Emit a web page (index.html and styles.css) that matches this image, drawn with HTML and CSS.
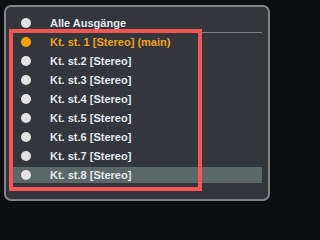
FILE: index.html
```html
<!DOCTYPE html>
<html>
<head>
<meta charset="utf-8">
<link rel="stylesheet" href="styles.css">
</head>
<body>
<div class="panel">
  <div class="header row">
    <span class="dot"></span>
    <span class="label">Alle Ausgänge</span>
  </div>
  <div class="sep"></div>
  <div class="list">
    <div class="row active"><span class="dot orange"></span><span class="label">Kt. st. 1 [Stereo] (main)</span></div>
    <div class="row"><span class="dot"></span><span class="label">Kt. st.2 [Stereo]</span></div>
    <div class="row"><span class="dot"></span><span class="label">Kt. st.3 [Stereo]</span></div>
    <div class="row"><span class="dot"></span><span class="label">Kt. st.4 [Stereo]</span></div>
    <div class="row"><span class="dot"></span><span class="label">Kt. st.5 [Stereo]</span></div>
    <div class="row"><span class="dot"></span><span class="label">Kt. st.6 [Stereo]</span></div>
    <div class="row"><span class="dot"></span><span class="label">Kt. st.7 [Stereo]</span></div>
    <div class="row selected"><span class="dot"></span><span class="label">Kt. st.8 [Stereo]</span></div>
  </div>
</div>
<div class="annot"></div>
</body>
</html>
```
FILE: styles.css
```css
html, body {
  margin: 0;
  padding: 0;
}
body {
  background: #0c0e0f;
  width: 274px;
  height: 205px;
  position: relative;
  overflow: hidden;
  padding: 5px 0 0 4px;
  box-sizing: border-box;
  font-family: "Liberation Sans", Arial, sans-serif;
}
.panel {
  width: 266px;
  height: 196px;
  box-sizing: border-box;
  border: 2px solid #828486;
  border-radius: 7px;
  background: #33373c;
  padding: 8px 6px 0 6px;
}
.row {
  display: flex;
  align-items: center;
  height: 16px;
}
.dot {
  width: 10px;
  height: 10px;
  border-radius: 50%;
  background: #e2e2e2;
  margin-left: 9px;
  flex: none;
}
.dot.orange {
  background: #f5a200;
}
.label {
  margin-left: 19px;
  font-size: 11px;
  font-weight: bold;
  color: #e3e8ee;
  white-space: nowrap;
}
.active .label {
  color: #f2a11e;
}
.sep {
  height: 1px;
  background: #7e8285;
  margin-top: 1px;
}
.list {
  padding-top: 1px;
  display: flex;
  flex-direction: column;
  gap: 3px;
}
.selected {
  background: #5b6966;
}
.annot {
  position: absolute;
  left: 9px;
  top: 29px;
  width: 193px;
  height: 162px;
  box-sizing: border-box;
  border: 4px solid #f45656;
}
```
